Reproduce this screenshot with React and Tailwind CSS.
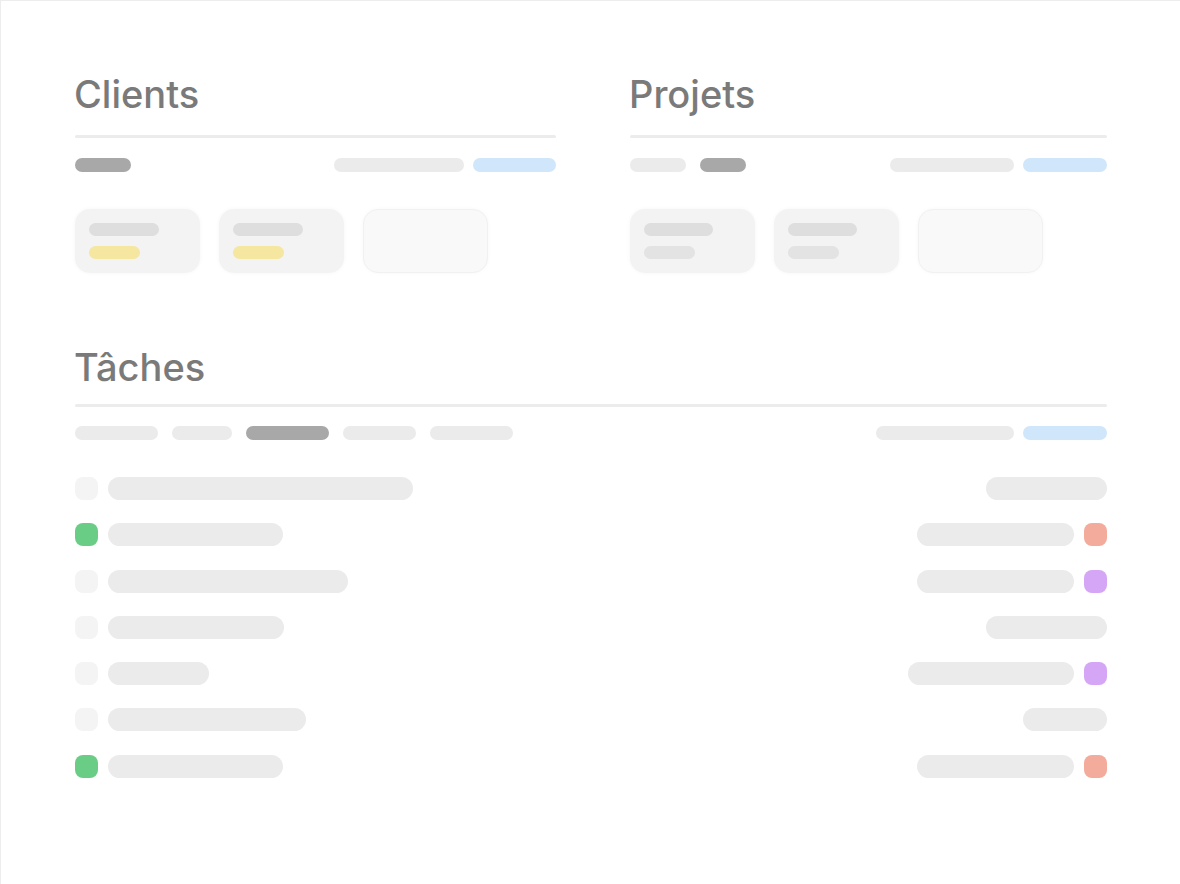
const bar = "rounded-full bg-[#ebebeb]";

function Pill({ w, tone = "light" }) {
  const tones = {
    light: "bg-[#ebebeb]",
    dark: "bg-[#a8a8a8]",
    blue: "bg-[#d0e6fa]",
  };
  return <div className={`h-[14px] rounded-full ${tones[tone]}`} style={{ width: w }} />;
}

function Heading({ children, gap = "mt-[22px]" }) {
  return (
    <div>
      <h2 className="text-[38px] leading-none font-medium text-[#7a7a7a] tracking-[0px] -ml-[1px]">
        {children}
      </h2>
      <div className={`${gap} h-[3px] rounded-full bg-[#ececec]`} />
    </div>
  );
}

function Card({ top, bottom, yellow }) {
  return (
    <div className="h-[64px] w-[125px] rounded-[15px] bg-[#f3f3f3] shadow-[0_0_4px_rgba(0,0,0,0.04)] px-[14px] pt-[14px] flex flex-col gap-[10px]">
      <div className="h-[13px] rounded-full bg-[#dedede]" style={{ width: top }} />
      <div
        className={`h-[13px] rounded-full ${yellow ? "bg-[#f5e6a0]" : "bg-[#e3e3e3]"}`}
        style={{ width: bottom }}
      />
    </div>
  );
}

function EmptyCard() {
  return (
    <div className="h-[64px] w-[125px] rounded-[15px] bg-[#f9f9f9] border border-[#f1f1f1] shadow-[0_0_4px_rgba(0,0,0,0.03)]" />
  );
}

const dots = {
  none: "bg-[#f4f4f4]",
  green: "bg-[#6acd86]",
  red: "bg-[#f3ab9c]",
  purple: "bg-[#d5a5f6]",
};

const tasks = [
  { left: 305, status: "none", right: 121, tag: null },
  { left: 175, status: "green", right: 157, tag: "red" },
  { left: 240, status: "none", right: 157, tag: "purple" },
  { left: 176, status: "none", right: 121, tag: null },
  { left: 101, status: "none", right: 166, tag: "purple" },
  { left: 198, status: "none", right: 84, tag: null },
  { left: 175, status: "green", right: 157, tag: "red" },
];

export default function App() {
  return (
    <div
      className="w-[1180px] h-[884px] bg-white border-t border-l border-[#ededed] overflow-hidden"
      style={{ fontFamily: "Inter, 'Noto Sans', sans-serif" }}
    >
      <div className="pl-[74px] pr-[73px] pt-[74px]">
        <div className="grid grid-cols-[481px_477px] gap-x-[74px]">
          <section>
            <Heading>Clients</Heading>
            <div className="mt-[20px] flex items-center justify-between">
              <Pill w={56} tone="dark" />
              <div className="flex gap-[9px]">
                <Pill w={130} />
                <Pill w={83} tone="blue" />
              </div>
            </div>
            <div className="mt-[37px] flex gap-[19px]">
              <Card top={70} bottom={51} yellow />
              <Card top={70} bottom={51} yellow />
              <EmptyCard />
            </div>
          </section>
          <section>
            <Heading>Projets</Heading>
            <div className="mt-[20px] flex items-center justify-between">
              <div className="flex gap-[14px]">
                <Pill w={56} />
                <Pill w={46} tone="dark" />
              </div>
              <div className="flex gap-[9px]">
                <Pill w={124} />
                <Pill w={84} tone="blue" />
              </div>
            </div>
            <div className="mt-[37px] flex gap-[19px]">
              <Card top={69} bottom={51} />
              <Card top={69} bottom={51} />
              <EmptyCard />
            </div>
          </section>
        </div>

        <section className="mt-[75px]">
          <Heading gap="mt-[18px]">Tâches</Heading>
          <div className="mt-[19px] flex items-center justify-between">
            <div className="flex gap-[14px]">
              <Pill w={83} />
              <Pill w={60} />
              <Pill w={83} tone="dark" />
              <Pill w={73} />
              <Pill w={83} />
            </div>
            <div className="flex gap-[9px]">
              <Pill w={138} />
              <Pill w={84} tone="blue" />
            </div>
          </div>
          <ul className="mt-[37px] flex flex-col gap-[23.3px]">
            {tasks.map((t, i) => (
              <li key={i} className="flex items-center justify-between h-[23px]">
                <div className="flex items-center gap-[10px]">
                  <span className={`h-[23px] w-[23px] rounded-[8px] ${dots[t.status]}`} />
                  <span className={`h-[23px] ${bar}`} style={{ width: t.left }} />
                </div>
                <div className="flex items-center gap-[10px]">
                  <span className={`h-[23px] ${bar}`} style={{ width: t.right }} />
                  {t.tag && <span className={`h-[23px] w-[23px] rounded-[8px] ${dots[t.tag]}`} />}
                </div>
              </li>
            ))}
          </ul>
        </section>
      </div>
    </div>
  );
}
